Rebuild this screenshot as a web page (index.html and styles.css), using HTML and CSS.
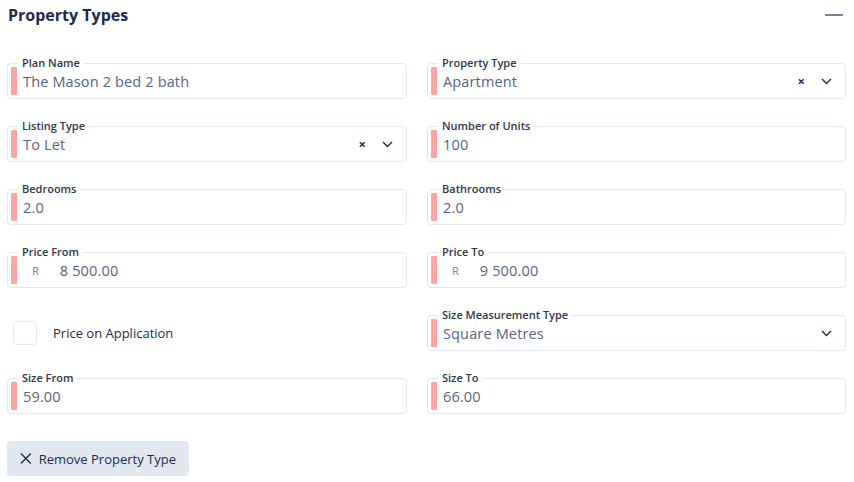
FILE: index.html
```html
<!DOCTYPE html>
<html lang="en">
<head>
  <meta charset="utf-8">
  <title>Property Types</title>
  <meta name="viewport" content="width=device-width,initial-scale=1">
  <link rel="stylesheet" href="styles.css">
</head>
<body>
  <section class="panel">
    <header class="panel-head">
      <h2>Property Types</h2>
      <span class="collapse" aria-label="Collapse"></span>
    </header>

    <div class="grid">
      <div class="field">
        <label>Plan Name</label>
        <span class="req"></span>
        <span class="value">The Mason 2 bed 2 bath</span>
      </div>
      <div class="field">
        <label>Property Type</label>
        <span class="req"></span>
        <span class="value">Apartment</span>
        <span class="clear">&times;</span>
        <svg class="chev" width="11" height="7" viewBox="0 0 11 7"><path d="M1 1l4.5 4.5L10 1" fill="none" stroke="#1e2a4a" stroke-width="1.4"/></svg>
      </div>

      <div class="field">
        <label>Listing Type</label>
        <span class="req"></span>
        <span class="value">To Let</span>
        <span class="clear">&times;</span>
        <svg class="chev" width="11" height="7" viewBox="0 0 11 7"><path d="M1 1l4.5 4.5L10 1" fill="none" stroke="#1e2a4a" stroke-width="1.4"/></svg>
      </div>
      <div class="field">
        <label>Number of Units</label>
        <span class="req"></span>
        <span class="value">100</span>
      </div>

      <div class="field">
        <label>Bedrooms</label>
        <span class="req"></span>
        <span class="value">2.0</span>
      </div>
      <div class="field">
        <label>Bathrooms</label>
        <span class="req"></span>
        <span class="value">2.0</span>
      </div>

      <div class="field">
        <label>Price From</label>
        <span class="req"></span>
        <span class="prefix">R</span>
        <span class="value">8 500.00</span>
      </div>
      <div class="field">
        <label>Price To</label>
        <span class="req"></span>
        <span class="prefix">R</span>
        <span class="value">9 500.00</span>
      </div>

      <div class="check">
        <span class="box"></span>
        <span>Price on Application</span>
      </div>
      <div class="field">
        <label>Size Measurement Type</label>
        <span class="req"></span>
        <span class="value">Square Metres</span>
        <svg class="chev only" width="11" height="7" viewBox="0 0 11 7"><path d="M1 1l4.5 4.5L10 1" fill="none" stroke="#1e2a4a" stroke-width="1.4"/></svg>
      </div>

      <div class="field">
        <label>Size From</label>
        <span class="req"></span>
        <span class="value">59.00</span>
      </div>
      <div class="field">
        <label>Size To</label>
        <span class="req"></span>
        <span class="value">66.00</span>
      </div>
    </div>

    <button class="remove">
      <svg width="13" height="13" viewBox="0 0 13 13"><path d="M1 1l11 11M12 1L1 12" stroke="#1e2a4a" stroke-width="1.5"/></svg>
      Remove Property Type
    </button>
  </section>
</body>
</html>
```

FILE: styles.css
```css
/* RESET */
* { box-sizing:border-box; margin:0; padding:0; }
html, body { background:#fff; font-family:"Open Sans", sans-serif; color:#1e2a4a; }

/* PANEL */
.panel { padding:0 8px 0 7px; }
.panel-head {
  display:flex; align-items:center; justify-content:space-between;
  height:30px; padding-left:1px;
}
.panel-head h2 { font-size:16px; font-weight:700; color:#1e2a4a; }
.collapse {
  width:18px; height:2px; background:#718096; margin-right:3px;
}

/* FIELDS */
.grid {
  display:grid; grid-template-columns:400px 1fr;
  column-gap:20px; row-gap:27px; margin-top:33px;
}
.field {
  position:relative; height:36px;
  border:1px solid #e2e8f0; border-radius:4px;
  display:flex; align-items:center; padding:3px;
}
.field label {
  position:absolute; top:-8px; left:10px;
  padding:0 4px; background:#fff;
  font-size:11px; font-weight:600; line-height:14px; color:#2d3748;
}
.req {
  width:6px; align-self:stretch; background:#fca5a5; border-radius:1px;
}
.value {
  margin-left:6px; font-size:14.5px; letter-spacing:.15px; color:#55657f;
}
.prefix {
  margin-left:15px; margin-right:21px; font-size:11px; color:#718096;
}
.prefix + .value { margin-left:0; }
.clear {
  margin-left:auto; font-size:13px; font-weight:700; color:#1e2a4a; margin-right:16px;
}
.chev { margin-right:10px; }
.chev.only { margin-left:auto; }

/* CHECKBOX */
.check {
  display:flex; align-items:center; gap:16px; padding-left:6px;
  font-size:13px; color:#1e2a4a;
}
.check .box {
  width:24px; height:24px; border:1px solid #e2e8f0; border-radius:4px;
}

/* BUTTON */
.remove {
  display:flex; align-items:center; gap:7px; white-space:nowrap;
  margin-top:27px; height:35px; width:182px; padding:0 13px;
  background:#e2e8f0; border:none; border-radius:4px;
  font-family:inherit; font-size:13px; color:#1e2a4a;
}
```
